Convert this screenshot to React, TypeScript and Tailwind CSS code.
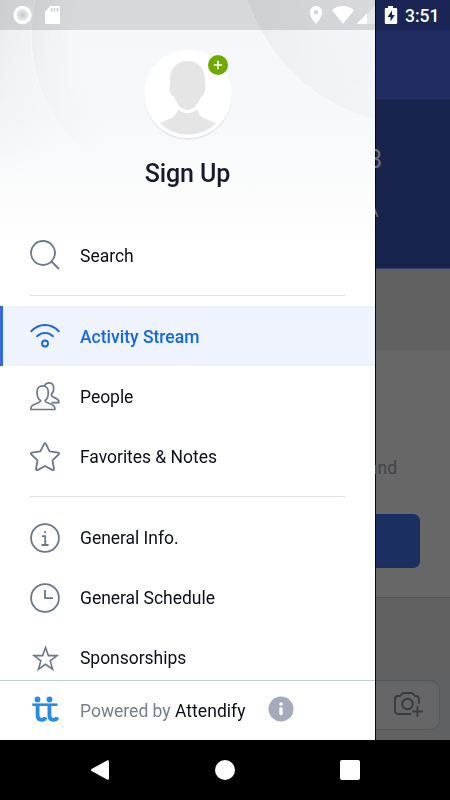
import React from "react";

const stroke = { fill: "none", stroke: "#6b778b", strokeWidth: 1.8 } as const;

function SearchIcon() {
  return (
    <svg width="30" height="30" viewBox="0 0 30 30" {...stroke}>
      <circle cx="13" cy="13" r="12" />
      <path d="M21.500 21.500L29 29" />
    </svg>
  );
}

function StreamIcon() {
  return (
    <svg width="30" height="30" viewBox="0 0 30 30" fill="none" stroke="#1766e8" strokeWidth="1.900" strokeLinecap="round">
      <path d="M1.200 10.200C9.500 2 20.500 2 28.800 10.200M7 15.200c4.900-4.300 11.100-4.300 16 0" />
      <circle cx="15" cy="22.500" r="3" />
    </svg>
  );
}

function PeopleIcon() {
  return (
    <svg width="30" height="30" viewBox="0 0 30 30" {...stroke} strokeWidth="1.700" strokeLinejoin="round">
      <path d="M12.500 3.900C9 3.900 7 6.400 7 9.900c0 3.600 1.600 7.400 3.700 8.600-.2 1.400-1.200 2-3.700 2.800C3.200 22.500.9 23.500.9 26.500v1h24v-1c0-3-2.300-4-6.200-5.200-2.500-.8-3.400-1.400-3.600-2.800 2.100-1.200 3.200-5 3.200-8.600 0-3.500-2.200-6-5.800-6z" />
      <path d="M14.500 4.300C15.200 2 17 .9 19.200.9c3.200 0 4.600 2.500 4.500 5.500 0 2.700-1 4.500-2.300 6-.2 1.800.9 2.600 3.500 3.500 2.800 1 4 1.900 4 4.800h-7.500" />
    </svg>
  );
}

function StarIcon() {
  return (
    <svg width="30" height="30" viewBox="0 0 30 30" {...stroke} strokeLinejoin="round">
      <path d="M14.100 1.900q.9-1.500 1.800 0l3.700 7.500 8.600 1.200q1.600.4.500 1.700l-6.200 6 1.500 8.700q0 1.600-1.500 1.100L15 24l-7.500 4.100q-1.500.5-1.500-1.100L7.500 18.300l-6.200-6q-1.100-1.300.5-1.700l8.600-1.200z" />
    </svg>
  );
}

function InfoIcon() {
  return (
    <svg width="30" height="30" viewBox="0 0 30 30" {...stroke}>
      <circle cx="15" cy="15" r="13.900" />
      <path d="M12 13.200h3.200V22M11.500 22h7M15.200 8v2.200" />
    </svg>
  );
}

function ClockIcon() {
  return (
    <svg width="30" height="30" viewBox="0 0 30 30" {...stroke}>
      <circle cx="15" cy="15" r="13.900" />
      <path d="M15 7v8.200h8" />
    </svg>
  );
}

function SponsorIcon() {
  return (
    <svg width="30" height="30" viewBox="0 0 30 30" {...stroke} strokeWidth="1.600">
      <path d="M15.500 4.500l2.900 8.100h8.600l-6.800 5.300 2.400 8.300-7.100-4.900-7.100 4.900 2.400-8.300L4 12.600h8.600z" />
    </svg>
  );
}

function Item({ icon, label, active = false }: { icon: React.ReactNode; label: string; active?: boolean }) {
  return (
    <div
      className={
        active
          ? "flex h-[60px] shrink-0 items-center gap-5 border-l-[3px] border-[#3569de] bg-[#eef3fd] pl-[27px] font-medium text-[#1766e8]"
          : "flex h-[60px] shrink-0 items-center gap-5 pl-[30px] text-[#0c0e1b]"
      }
    >
      {icon}
      <span className={active || label === "Search" ? "pt-px text-[17.500px] leading-6" : "text-[17.500px] leading-6 tracking-[-0.03px]"}>
        {label}
      </span>
    </div>
  );
}

function Backdrop() {
  return (
    <svg className="absolute inset-0" width="375" height="250" viewBox="0 0 375 250">
      <defs>
        <linearGradient id="base" x1="0" y1="0" x2="0" y2="1">
          <stop offset="0" stopColor="#f6f7fa" />
          <stop offset=".45" stopColor="#f7f8fa" />
          <stop offset="1" stopColor="#fff" />
        </linearGradient>
        <linearGradient id="side" x1="0" y1="0" x2="1" y2="0">
          <stop offset="0" stopColor="#e9ebef" />
          <stop offset="1" stopColor="#eff1f4" stopOpacity="0" />
        </linearGradient>
        <linearGradient id="fade" x1="0" y1="0" x2="0" y2="1">
          <stop offset="0" stopColor="#fff" />
          <stop offset=".72" stopColor="#000" />
        </linearGradient>
        <radialGradient id="ringA" gradientUnits="userSpaceOnUse" cx="186" cy="35" r="155">
          <stop offset=".72" stopColor="#e6e8ed" stopOpacity="0" />
          <stop offset="1" stopColor="#e6e8ed" stopOpacity=".75" />
        </radialGradient>
        <linearGradient id="leftOnly" gradientUnits="userSpaceOnUse" x1="20" y1="0" x2="120" y2="0">
          <stop offset="0" stopColor="#fff" />
          <stop offset="1" stopColor="#000" />
        </linearGradient>
        <radialGradient id="ringB" gradientUnits="userSpaceOnUse" cx="424" cy="-60" r="187">
          <stop offset=".5" stopColor="#e9ebef" stopOpacity="0" />
          <stop offset="1" stopColor="#e9ebef" stopOpacity=".85" />
        </radialGradient>
        <mask id="vertical" maskUnits="userSpaceOnUse" x="0" y="0" width="375" height="250"><rect width="375" height="250" fill="url(#fade)" /></mask>
        <mask id="horizontal" maskUnits="userSpaceOnUse" x="0" y="0" width="375" height="250"><rect width="375" height="250" fill="url(#leftOnly)" /></mask>
      </defs>
      <rect width="375" height="250" fill="url(#base)" />
      <g mask="url(#vertical)">
        <rect width="70" height="250" fill="url(#side)" />
        <g mask="url(#horizontal)">
          <circle cx="186" cy="35" r="155" fill="url(#ringA)" stroke="#fff" strokeOpacity=".7" />
        </g>
        <circle cx="424" cy="-60" r="187" fill="url(#ringB)" stroke="#fff" strokeOpacity=".9" />
      </g>
    </svg>
  );
}

function Avatar() {
  return (
    <svg width="92" height="92" viewBox="0 0 92 92">
      <defs>
        <clipPath id="face"><circle cx="46" cy="44" r="40.500" /></clipPath>
      </defs>
      <circle cx="46" cy="46" r="44" fill="#e8e9ec" />
      <circle cx="46" cy="44" r="44" fill="#fff" />
      <g clipPath="url(#face)" fill="#e5e5e5">
        <path d="M45.500 11C34.500 11 28 19 28 29l.1 6.500c-1 1.600-.7 6.500 1.400 9 1.200 1.500 2.500 1.700 3.100 3.300C35.400 54.800 39.500 60 45.500 60s10.100-5.200 12.900-12.200c.6-1.600 1.900-1.800 3.100-3.300 2.100-2.500 2.400-7.400 1.400-9L63 29c0-10-6.500-18-17.500-18z" />
        <path d="M35.800 59.500c4.500 4.500 14.900 4.500 19.400 0 1.500 5.500 3.800 7.500 9.300 9.800l11 4.700V92H16V74l10.500-4.700c5.500-2.300 7.800-4.300 9.300-9.800z" />
      </g>
    </svg>
  );
}

function StatusIcons() {
  return (
    <>
      <svg width="60" height="20" viewBox="0 0 60 20" fill="#fff">
        <circle cx="9.500" cy="10" r="9.200" />
        <circle cx="9.500" cy="10" r="5.800" fill="#dedfe1" />
        <circle cx="9.500" cy="10" r="2.600" fill="#d0d1d3" />
        <path d="M37.500 1H45.500q1.500 0 1.500 1.500v15q0 1.500-1.500 1.500h-12Q32 19 32 17.500V6.500z" />
        <path d="M38.500 3v3.500M41.500 3v3.500M44.500 3v3.500" stroke="#d0d1d3" strokeWidth="1.700" />
      </svg>
      <svg width="67" height="20" viewBox="0 0 67 20" fill="#fff">
        <path fillRule="evenodd" d="M8 1a6.200 6.200 0 0 0-6.200 6.200C1.800 12 8 19 8 19s6.200-7 6.200-11.800A6.200 6.200 0 0 0 8 1zm0 4a2.200 2.200 0 1 1 0 4.400A2.200 2.200 0 0 1 8 5z" />
        <path d="M24 5.200C30.500-.4 39.500-.4 46 5.200L35 18.800z" />
        <path d="M67 .5V19H48.500z" opacity=".35" />
        <path d="M59 8.500V19H48.500z" />
      </svg>
    </>
  );
}

function Drawer() {
  return (
    <aside className="relative z-10 flex h-full w-[375px] shrink-0 flex-col bg-white">
      <Backdrop />
      <div className="relative flex h-[30px] shrink-0 items-center justify-between bg-black/[0.125] pl-[13px]">
        <StatusIcons />
      </div>
      <header className="relative flex h-[195px] shrink-0 flex-col items-center pt-5">
        <div className="relative h-[92px] w-[92px]">
          <Avatar />
          <svg className="absolute top-[5px] left-[66px]" width="20" height="20" viewBox="0 0 20 20">
            <circle cx="10" cy="10" r="10" fill="#70a900" />
            <path d="M10 5.800v8.400M5.800 10h8.400" stroke="#fff" strokeWidth="1.600" />
          </svg>
        </div>
        <h1 className="mt-[17px] text-[25px] leading-[30px] font-medium tracking-[-0.1px] text-[#171a2d]">Sign Up</h1>
      </header>
      <nav className="relative flex min-h-0 flex-1 flex-col overflow-hidden">
        <Item icon={<SearchIcon />} label="Search" />
        <hr className="mx-[30px] mt-[10px] mb-[10px] shrink-0 border-[#dfe0e7]" />
        <Item icon={<StreamIcon />} label="Activity Stream" active />
        <div className="h-px shrink-0" />
        <Item icon={<PeopleIcon />} label="People" />
        <Item icon={<StarIcon />} label="Favorites & Notes" />
        <hr className="mx-[30px] mt-[9px] mb-[11px] shrink-0 border-[#dfe0e7]" />
        <Item icon={<InfoIcon />} label="General Info." />
        <Item icon={<ClockIcon />} label="General Schedule" />
        <Item icon={<SponsorIcon />} label="Sponsorships" />
      </nav>
      <footer className="relative flex h-[60px] shrink-0 items-center border-t border-[#c3cecf] bg-white pl-[30px] text-[17.500px] text-[#0c0e1b]">
        <svg className="mr-5" width="30" height="30" viewBox="0 0 30 30" fill="#258be6">
          <circle cx="7.500" cy="3.500" r="2.900" />
          <circle cx="19.500" cy="3.500" r="2.900" />
          <path d="M2.300 8.700h25.200" fill="none" stroke="#258be6" strokeWidth="2.600" />
          <path d="M7.600 8v11.500q0 4.300 4 4.300q3.200 0 3.800-2.600M19.400 8v11.500q0 4.300 4 4.300q3.200 0 3.800-2.600" fill="none" stroke="#258be6" strokeWidth="3.800" />
        </svg>
        <span className="pt-px text-[#757d90]">Powered by</span>&nbsp;<span className="pt-px tracking-[0.05px]">Attendify</span>
        <svg className="ml-[22.500px] -mt-1" width="26" height="26" viewBox="0 0 26 26">
          <circle cx="13" cy="13" r="12.500" fill="#a4aaba" />
          <path d="M13 12.800v4.700" stroke="#fff" strokeWidth="3.400" strokeLinecap="round" />
          <circle cx="13" cy="8" r="1.800" fill="#fff" />
        </svg>
      </footer>
    </aside>
  );
}

function DimmedPage() {
  return (
    <section className="flex h-full w-[75px] flex-col border-l border-[#050716] bg-[#616161]">
      <div className="flex h-[30px] shrink-0 items-center gap-2 bg-[#1a2555] pl-2 text-[17.500px] font-medium text-white">
        <svg className="shrink-0" width="14" height="20" viewBox="0 0 14 20">
          <path d="M4 1h5v2h3q1.200 0 1.200 1.200v13.600q0 1.200-1.200 1.200H2Q.8 19 .8 17.800V4.200Q.8 3 2 3h2z" fill="#fff" />
          <path d="M8 5.500L3.500 12h3v4.500L10.800 10H8z" fill="#1a2555" />
        </svg>
        <span className="-ml-px pt-[2px]">3:51</span>
      </div>
      <div className="h-[70px] shrink-0 bg-[#202c62]" />
      <div className="flex h-[169px] shrink-0 flex-col items-start border-t border-b border-t-[#151d40] border-b-[#343d65] bg-[#19244e] pt-[44px] text-[#707074]">
        <span className="-ml-[8px] text-[25px] leading-[30px]">8</span>
        <span className="-ml-[8px] mt-[27px] text-[16px] leading-5">A</span>
      </div>
      <div className="h-[80px] shrink-0 bg-[#616161]" />
      <div className="flex h-[249px] shrink-0 flex-col items-start border-t border-b border-t-[#606060] border-b-[#555] bg-[#676767] pt-[106px] text-[17.500px] leading-6 text-[#40444c]">
        <span className="-ml-[8px]">and</span>
        <div className="mt-[34px] h-[54px] w-[44px] rounded-r-[7px] border border-l-0 border-[#123068] bg-[#1b3060]" />
      </div>
      <div className="h-[72px] shrink-0 bg-[#616161]" />
      <div className="flex flex-1 flex-col bg-[#606163] pt-[10px]">
        <div className="flex h-[50px] w-[64px] items-center rounded-r-[10px] border border-l-0 border-[#58595d] bg-[#666] pl-[17px]">
          <svg className="-mt-[2px]" width="30" height="28" viewBox="0 0 30 28" fill="none" stroke="#373b45" strokeWidth="1.900" strokeLinecap="round" strokeLinejoin="round">
            <path d="M17.500 24H5.500Q2 24 2 20.500V9Q2 6 5 6h2.200l1.600-2q.8-1 2-1h7.400q1.200 0 2 1l1.600 2H23q3 0 3 3v4M24.500 17v9M20 21.500h9" />
            <circle cx="14.500" cy="14" r="5.300" />
          </svg>
        </div>
      </div>
    </section>
  );
}

export default function App() {
  return (
    <div className="flex h-[800px] w-[450px] flex-col overflow-hidden bg-black font-['Roboto',sans-serif]">
      <main className="flex h-[740px] shrink-0">
        <Drawer />
        <DimmedPage />
      </main>
      <div className="flex h-[60px] items-center justify-center gap-[105px]">
        <svg width="20" height="20" viewBox="0 0 20 20" fill="#fff"><path d="M17.500.3Q19 0 19 1.500v17q0 1.500-1.500 1.200L1.500 11q-1-1 0-2z" /></svg>
        <div className="h-5 w-5 rounded-full bg-white" />
        <div className="h-5 w-5 rounded-[2px] bg-white" />
      </div>
    </div>
  );
}
